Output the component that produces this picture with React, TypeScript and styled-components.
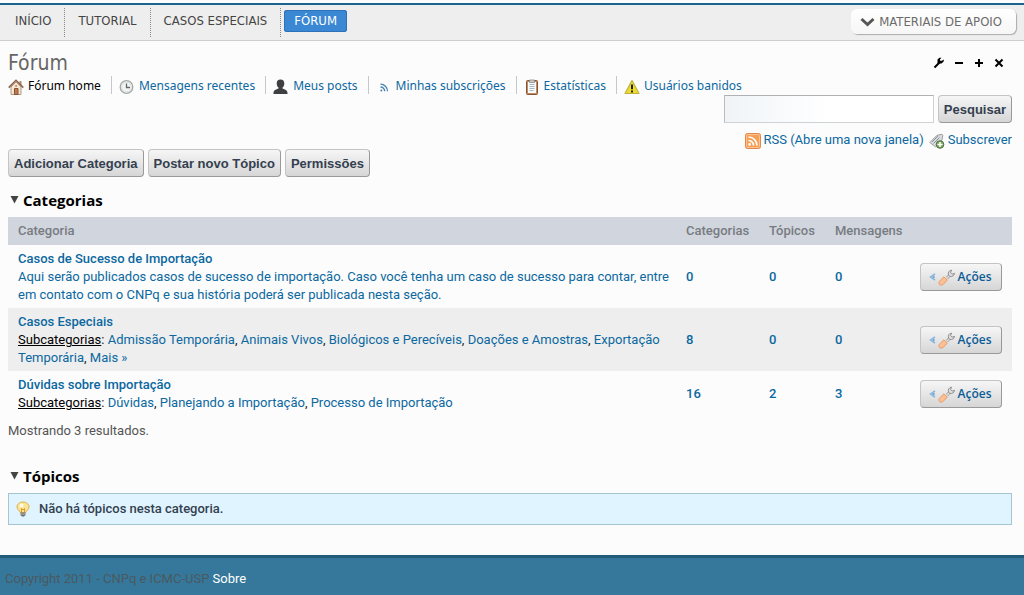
import React from 'react';
import styled, { createGlobalStyle, css } from 'styled-components';

const body = `Roboto, 'Noto Sans', sans-serif`;
const humanist = `'Open Sans', 'Noto Sans', sans-serif`;
const wide = `'DejaVu Sans Condensed', 'DejaVu Sans', sans-serif`;
const grotesque = `'Liberation Sans', Arial, sans-serif`;

const GlobalStyle = createGlobalStyle`
  *, *::before, *::after { box-sizing: border-box; }
  body {
    margin: 0;
    background: #fcfcfc;
    color: #555;
    font: 13px/18px ${body};
  }
  a { color: #0b68a0; text-decoration: none; }
  svg { display: block; flex: none; }
`;

const Page = styled.div`
  display: flex;
  flex-direction: column;
  min-height: 100vh;
`;

const TopBar = styled.header`
  display: flex;
  justify-content: space-between;
  align-items: flex-start;
  flex: none;
  height: 38px;
  margin: 3px 0 9px;
  padding: 3px 8px 0 2px;
  border-top: 2px solid #1d6390;
  border-bottom: 1px solid #cfcfcf;
  background: #eee;
`;

const Nav = styled.nav`
  display: flex;
`;

const NavCell = styled.div<{ $last?: boolean }>`
  padding: 2px 3px 5px;
  border-right: ${p => (p.$last ? '0' : '1px dotted #888')};
`;

const NavLink = styled.a<{ $active?: boolean }>`
  display: block;
  padding: 0 10px;
  border-radius: 3px;
  font: 13px/22px ${wide};
  color: #444;
  ${p => p.$active && css`
    background: #3a87d3;
    box-shadow: inset 0 0 0 1px #2d72b8;
    color: #fff;
  `}
`;

const SupportButton = styled.button`
  display: flex;
  align-items: center;
  gap: 4px;
  height: 25px;
  margin-top: 1px;
  padding: 0 14px 0 9px;
  border: 0;
  border-radius: 6px;
  background: linear-gradient(#fff, #f6f6f6);
  box-shadow: 1px 1px 1px #aaa;
  color: #6b6b6b;
  font: 13px/18px ${wide};
`;

const Main = styled.main`
  display: flex;
  flex-direction: column;
  padding: 0 12px 0 8px;
`;

const TitleRow = styled.div`
  display: flex;
  justify-content: space-between;
  align-items: center;
  height: 26px;
  padding-right: 8px;
`;

const Title = styled.h1`
  margin: 0;
  font: 21px/26px ${wide};
  color: #666;
`;

const WindowTools = styled.div`
  display: flex;
  align-items: center;
  gap: 10px;
`;

const ToolButton = styled.button`
  display: flex;
  padding: 0;
  border: 0;
  background: none;
  color: #000;
`;

const ForumMenu = styled.nav`
  display: flex;
  height: 19px;
`;

const MenuLink = styled.a<{ $current?: boolean }>`
  display: flex;
  align-items: center;
  gap: 4px;
  height: 18px;
  padding: 2px 10px 0 7px;
  border-right: 1px solid #c4c7cc;
  font: 12px/18px 'Noto Sans', sans-serif;
  ${p => p.$current && css`color: #000;`}
  &:first-child { padding-left: 0; }
  &:last-child { border-right: 0; }
  svg { margin-top: 1px; }
`;

const SearchForm = styled.form`
  display: flex;
  justify-content: flex-end;
  gap: 4px;
`;

const SearchInput = styled.input`
  width: 210px;
  height: 28px;
  padding: 4px;
  border: 1px solid #d0d3d6;
  border-top-color: #aeb2b5;
  border-left-color: #b9bdc0;
  background: linear-gradient(90deg, #f0f4f7, #fff 50%);
  font: 13px/18px ${grotesque};
`;

const buttonFace = css`
  height: 28px;
  border: 1px solid #c4c4c4;
  border-right-color: #999;
  border-bottom-color: #999;
  border-radius: 4px;
  background: linear-gradient(#f6f6f6, #d6d6d6);
`;

const Button = styled.button`
  ${buttonFace}
  padding: 1px 5px 0;
  color: #34404f;
  font: bold 13px/18px ${grotesque};
`;

const Feeds = styled.div`
  display: flex;
  justify-content: flex-end;
  gap: 5px;
  height: 26px;
  padding-top: 8px;
`;

const FeedLink = styled.a`
  display: flex;
  align-items: center;
  gap: 3px;
  height: 18px;
  svg { margin-top: 2px; }
`;

const ButtonRow = styled.div`
  display: flex;
  gap: 4px;
`;

const SectionTitle = styled.h2`
  display: flex;
  align-items: center;
  gap: 4px;
  margin: 13px 0 7px;
  padding-left: 2px;
  color: #000;
  font: bold 15px/20px ${humanist};
`;

const Table = styled.table`
  width: 100%;
  border-collapse: collapse;
  table-layout: fixed;
`;

const Head = styled.th<{ $width?: number }>`
  width: ${p => (p.$width ? `${p.$width}px` : 'auto')};
  height: 28px;
  padding: 0 0 0 10px;
  background: #d1d5dd;
  color: #777c82;
  font-weight: 500;
  text-align: left;
`;

const Row = styled.tr`
  &:nth-child(even) { background: #eee; }
`;

const Cell = styled.td`
  padding: 5px 4px 4px 10px;
  vertical-align: middle;
  color: #222;
`;

const Strong = styled.a`
  font-weight: 500;
`;

const Label = styled.span`
  color: #000;
  text-decoration: underline;
`;

const ActionButton = styled.button`
  ${buttonFace}
  display: flex;
  align-items: center;
  justify-content: center;
  gap: 2px;
  width: 82px;
  padding: 0 6px 0 4px;
  color: #0b5c96;
  font: 600 12px/18px ${humanist};
`;

const Count = styled.p`
  margin: 6px 0 13px;
`;

const Info = styled.p`
  display: flex;
  align-items: center;
  gap: 8px;
  height: 32px;
  margin: 0 0 30px;
  padding: 0 6px;
  border: 1px solid #a5c6d0;
  background: #dff4ff;
  color: #34404f;
  font-weight: 500;
`;

const Footer = styled.footer`
  flex: 1 0 40px;
  padding: 12px 5px 7px;
  border-top: 3px solid #235c78;
  background: #35789b;
  color: #4b5860;
  a { color: #fff; }
`;

const HomeIcon = () => (
  <svg width="16" height="16" viewBox="0 0 16 16">
    <path d="M11.500 2h2v4h-2z" fill="#b98a70" />
    <path d="M3 8l5-5 5 5v7.500H3z" fill="#f3e6d2" stroke="#b39a80" />
    <path d="M.7 8.600L8 1.300l7.300 7.300" fill="none" stroke="#8d6350" strokeWidth="1.600" />
    <path d="M6.500 9.500h3.500v6H6.500z" fill="#c07a50" stroke="#8a5232" />
    <path d="M7.200 6h1.800v1.800H7.200z" fill="#c98a66" />
  </svg>
);
const ClockIcon = () => (
  <svg width="16" height="16" viewBox="0 0 16 16">
    <circle cx="7.500" cy="8" r="6.300" fill="#f3f5f5" stroke="#a3a8a8" strokeWidth="1.300" />
    <circle cx="7.500" cy="8" r="4.800" fill="none" stroke="#dbe1e1" />
    <path d="M7.500 4.500v4H11" fill="none" stroke="#666" strokeWidth="1.300" />
  </svg>
);
const UserIcon = () => (
  <svg width="16" height="16" viewBox="0 0 16 16">
    <path d="M7.500.5c2.500 0 3.800 1.600 3.800 4 0 1.900-.8 3.300-1.800 4.100v1c1.500.8 4.900 1.200 5 4.400v1H.5v-1c.1-3.200 3.500-3.600 5-4.400v-1c-1-.8-1.800-2.200-1.800-4.100 0-2.400 1.300-4 3.800-4z" fill="#3d3f41" />
  </svg>
);
const WavesIcon = () => (
  <svg width="16" height="16" viewBox="0 0 16 16">
    <g fill="none" stroke="#4584b4" strokeWidth="1.300">
      <path d="M4.500 5.200A7 7 0 0 1 11.500 12.200" />
      <path d="M4.500 8a4.200 4.200 0 0 1 4.200 4.200" />
    </g>
    <circle cx="5.300" cy="11.400" r="1" fill="#4584b4" />
  </svg>
);
const ClipboardIcon = () => (
  <svg width="16" height="16" viewBox="0 0 16 16">
    <rect x="2.500" y="1.500" width="11" height="14" rx="1" fill="#c48a5e" stroke="#86543a" />
    <path d="M4 3h8v11H4z" fill="#fafbfb" />
    <path d="M5.500 1h5v2.500h-5z" fill="#ccc" stroke="#888" strokeWidth=".8" />
    <path d="M5.500 5.500h5M5.500 7.500h5M5.500 9.500h5M5.500 11.500h4" stroke="#a5b8c2" />
  </svg>
);
const WarningIcon = () => (
  <svg width="16" height="16" viewBox="0 0 16 16">
    <path d="M8 1.500L15 14.500H1z" fill="#eedc2b" stroke="#bfb040" strokeWidth="1.200" strokeLinejoin="round" />
    <path d="M8 5.500v4.800M8 11.500v2" stroke="#222" strokeWidth="2" />
  </svg>
);
const RssIcon = () => (
  <svg width="16" height="16" viewBox="0 0 16 16">
    <rect x=".5" y=".5" width="15" height="15" rx="2" fill="#f6a055" stroke="#e2874a" />
    <rect x="1.500" y="1.500" width="13" height="13" rx="1" fill="none" stroke="#fbc394" />
    <path d="M3.500 4A8.500 8.500 0 0 1 12 12.500M3.500 7.500a5 5 0 0 1 5 5" fill="none" stroke="#fff" strokeWidth="1.700" />
    <circle cx="4.600" cy="11.400" r="1.300" fill="#fff" />
  </svg>
);
const TagIcon = () => (
  <svg width="16" height="16" viewBox="0 0 16 16">
    <path d="M.8 9.500L8 2.300l5-1 .8.900-.8 4.800-6.500 6.800z" fill="#d9dcdf" stroke="#9a9fa3" />
    <path d="M3 9l6-6M4.500 10.500l6-6" stroke="#8b9296" />
    <circle cx="11" cy="11.500" r="3.800" fill="#7da262" stroke="#4c743a" />
    <path d="M11 9v5M8.500 11.500h5" stroke="#fff" strokeWidth="1.500" />
  </svg>
);
const WrenchIcon = () => (
  <svg width="12" height="12" viewBox="0 0 12 12">
    <path d="M2.500 10.500L7.500 5.500" stroke="#000" strokeWidth="2" />
    <path d="M5.500 6.500V2.600L7.400.8H9.500L8 2.300v1.500h1.800L12 2.500 11.500 4.800 9.500 6.500z" fill="#000" />
  </svg>
);
const GlyphIcon = ({ d }: { d: string }) => (
  <svg width="10" height="10" viewBox="0 0 10 10">
    <path d={d} stroke="#000" strokeWidth="2" fill="none" />
  </svg>
);
const ChevronIcon = () => (
  <svg width="15" height="10" viewBox="0 0 15 10">
    <path d="M1.500 2l6 5.500 6-5.500" fill="none" stroke="#555" strokeWidth="3" />
  </svg>
);
const Triangle = () => (
  <svg width="9" height="8" viewBox="0 0 9 8">
    <path d="M.5 0h8L4.500 7.500z" fill="#444" />
  </svg>
);
const ArrowIcon = () => (
  <svg width="7" height="8" viewBox="0 0 7 8">
    <path d="M6 .8L1.500 4 6 7.200" fill="none" stroke="#86b4dc" strokeWidth="1.500" />
    <path d="M5.500 2.500L3 4l2.500 1.500z" fill="#5f9bd0" />
  </svg>
);
const ActionIcon = () => (
  <svg width="18" height="18" viewBox="0 0 18 18">
    <path d="M9 10l3-3" stroke="#999" strokeWidth="3" />
    <path d="M9 10l3-3" stroke="#e2e2e2" strokeWidth="1.500" />
    <path d="M10.500 7C9.800 4.500 11 2.500 13.500 2.100L12.600 4.500l1.600 1.600L16.600 5.300C16.300 7.500 14 9.200 11.800 8.300z" fill="#dedede" stroke="#8e8e8e" />
    <path d="M1.600 16.600c-1.300-1.300-.5-3 .6-4.100L6 8.800l3.400 3.400-3.900 3.700c-1.100 1.100-2.800 1.800-3.900.7z" fill="#fdbf94" stroke="#e39b6c" />
  </svg>
);
const BulbIcon = () => (
  <svg width="16" height="16" viewBox="0 0 16 16">
    <path d="M8 1c3.700 0 6 2.300 6 5 0 2.500-2.700 3.500-3.200 5.500H5.200C4.700 9.500 2 8.500 2 6c0-2.700 2.300-5 6-5z" fill="#fbe494" stroke="#dfb04c" />
    <circle cx="6.500" cy="4.500" r="2" fill="#fffbe2" />
    <path d="M6.500 11V7.500L8 9l1.500-1.500V11" fill="none" stroke="#df972b" />
    <path d="M5.500 11.500h5v2.500l-1.500 1.500H7L5.500 14z" fill="#6e6e6e" />
    <path d="M5.500 13h5" stroke="#bbb" />
  </svg>
);

const menu = [
  { text: 'Fórum home', icon: <HomeIcon /> },
  { text: 'Mensagens recentes', icon: <ClockIcon /> },
  { text: 'Meus posts', icon: <UserIcon /> },
  { text: 'Minhas subscrições', icon: <WavesIcon /> },
  { text: 'Estatísticas', icon: <ClipboardIcon /> },
  { text: 'Usuários banidos', icon: <WarningIcon /> },
];

interface Category {
  name: string;
  description?: string;
  children?: string[];
  counts: number[];
}

const categories: Category[] = [
  {
    name: 'Casos de Sucesso de Importação',
    description:
      'Aqui serão publicados casos de sucesso de importação. Caso você tenha um caso de sucesso para contar, entre em contato com o CNPq e sua história poderá ser publicada nesta seção.',
    counts: [0, 0, 0],
  },
  {
    name: 'Casos Especiais',
    children: ['Admissão Temporária', 'Animais Vivos', 'Biológicos e Perecíveis', 'Doações e Amostras', 'Exportação Temporária', 'Mais »'],
    counts: [8, 0, 0],
  },
  {
    name: 'Dúvidas sobre Importação',
    children: ['Dúvidas', 'Planejando a Importação', 'Processo de Importação'],
    counts: [16, 2, 3],
  },
];

const CategoryRow = ({ item }: { item: Category }) => (
  <Row>
    <Cell>
      <Strong href="#">{item.name}</Strong>
      <br />
      {item.description && <a href="#">{item.description}</a>}
      {item.children && (
        <>
          <Label>Subcategorias</Label>:{' '}
          {item.children.map((child, i) => (
            <React.Fragment key={child}>
              {i > 0 && ', '}
              <a href="#">{child}</a>
            </React.Fragment>
          ))}
        </>
      )}
    </Cell>
    {item.counts.map((n, i) => (
      <Cell key={i}>
        <Strong href="#">{n}</Strong>
      </Cell>
    ))}
    <Cell>
      <ActionButton type="button">
        <ArrowIcon />
        <ActionIcon />
        Ações
      </ActionButton>
    </Cell>
  </Row>
);

export default function App() {
  return (
    <Page>
      <GlobalStyle />
      <TopBar>
        <Nav aria-label="Principal">
          <NavCell><NavLink href="#">INÍCIO</NavLink></NavCell>
          <NavCell><NavLink href="#">TUTORIAL</NavLink></NavCell>
          <NavCell><NavLink href="#">CASOS ESPECIAIS</NavLink></NavCell>
          <NavCell $last><NavLink href="#" $active>FÓRUM</NavLink></NavCell>
        </Nav>
        <SupportButton type="button">
          <ChevronIcon />
          MATERIAIS DE APOIO
        </SupportButton>
      </TopBar>
      <Main>
        <TitleRow>
          <Title>Fórum</Title>
          <WindowTools>
            <ToolButton type="button" aria-label="Configurar"><WrenchIcon /></ToolButton>
            <ToolButton type="button" aria-label="Minimizar"><GlyphIcon d="M1 5h8" /></ToolButton>
            <ToolButton type="button" aria-label="Maximizar"><GlyphIcon d="M1 5h8M5 1v8" /></ToolButton>
            <ToolButton type="button" aria-label="Fechar"><GlyphIcon d="M1.500 1.500l7 7M8.500 1.500l-7 7" /></ToolButton>
          </WindowTools>
        </TitleRow>
        <ForumMenu aria-label="Fórum">
          {menu.map((m, i) => (
            <MenuLink key={m.text} href="#" $current={i === 0}>
              {m.icon}
              {m.text}
            </MenuLink>
          ))}
        </ForumMenu>
        <SearchForm>
          <SearchInput type="text" aria-label="Pesquisar no fórum" />
          <Button type="button">Pesquisar</Button>
        </SearchForm>
        <Feeds>
          <FeedLink href="#"><RssIcon />RSS (Abre uma nova janela)</FeedLink>
          <FeedLink href="#"><TagIcon />Subscrever</FeedLink>
        </Feeds>
        <ButtonRow>
          <Button type="button">Adicionar Categoria</Button>
          <Button type="button">Postar novo Tópico</Button>
          <Button type="button">Permissões</Button>
        </ButtonRow>
        <SectionTitle><Triangle />Categorias</SectionTitle>
        <Table>
          <thead>
            <tr>
              <Head>Categoria</Head>
              <Head $width={83}>Categorias</Head>
              <Head $width={66}>Tópicos</Head>
              <Head $width={85}>Mensagens</Head>
              <Head $width={102} aria-label="Ações" />
            </tr>
          </thead>
          <tbody>
            {categories.map(c => <CategoryRow key={c.name} item={c} />)}
          </tbody>
        </Table>
        <Count>Mostrando 3 resultados.</Count>
        <SectionTitle><Triangle />Tópicos</SectionTitle>
        <Info><BulbIcon />Não há tópicos nesta categoria.</Info>
      </Main>
      <Footer>
        Copyright 2011 - CNPq e ICMC-USP <a href="#">Sobre</a>
      </Footer>
    </Page>
  );
}
